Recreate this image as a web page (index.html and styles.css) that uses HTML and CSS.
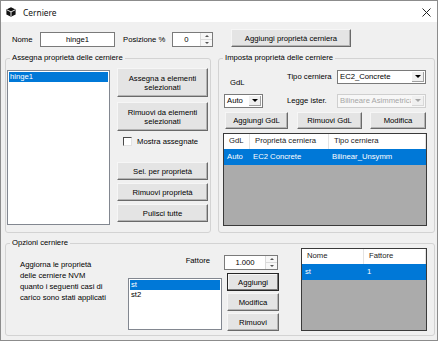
FILE: index.html
```html
<!DOCTYPE html>
<html lang="it">
<head>
    <meta charset="UTF-8">
    <meta name="viewport" content="width=device-width, initial-scale=1.0">
    <title>Cerniere</title>
    <link rel="stylesheet" href="styles.css">
</head>
<body>

<div class="window">
    <div class="titlebar">
        <svg class="app-icon" viewBox="0 0 10 10" width="10" height="10">
            <path d="M5 0.3 L9.6 2.6 V7.4 L5 9.7 L0.4 7.4 V2.6 Z" fill="#111"/>
            <path d="M1 2.9 L5 4.9 L9 2.9 M5 4.9 V9.3" stroke="#fff" stroke-width="0.9" fill="none"/>
        </svg>
        <span class="title">Cerniere</span>
        <svg class="close" viewBox="0 0 9 9" width="9" height="9">
            <path d="M0.5 0.5 L8.5 8.5 M8.5 0.5 L0.5 8.5" stroke="#222" stroke-width="1"/>
        </svg>
    </div>

    <div class="client">
        <div class="top-row">
            <span class="lbl lbl-nome">Nome</span>
            <div class="textbox name-box">hinge1</div>
            <span class="lbl lbl-pos">Posizione %</span>
            <div class="spin spin-pos">
                <span class="spin-text">0</span>
                <span class="spin-btns"><i class="spin-up"></i><i class="spin-down"></i></span>
            </div>
            <button class="btn btn-add-prop">Aggiungi proprietà cerniera</button>
        </div>

        <div class="mid-row">
            <fieldset class="group group-assign">
                <legend>Assegna proprietà delle cerniere</legend>
                <div class="assign-body">
                    <div class="listbox lb-hinges">
                        <div class="lb-item selected">hinge1</div>
                    </div>
                    <div class="assign-buttons">
                        <button class="btn btn-tall">Assegna a elementi<br>selezionati</button>
                        <button class="btn btn-tall">Rimuovi da elementi<br>selezionati</button>
                        <label class="check"><span class="check-box"></span>Mostra assegnate</label>
                        <button class="btn btn-sel">Sel. per proprietà</button>
                        <button class="btn">Rimuovi proprietà</button>
                        <button class="btn">Pulisci tutte</button>
                    </div>
                </div>
            </fieldset>

            <fieldset class="group group-set">
                <legend>Imposta proprietà delle cerniere</legend>
                <div class="set-grid">
                    <span class="lbl lbl-gdl">GdL</span>
                    <span class="lbl lbl-tipo">Tipo cerniera</span>
                    <div class="combo combo-tipo">
                        <span class="combo-text">EC2_Concrete</span>
                        <span class="combo-arrow"></span>
                    </div>
                    <div class="combo combo-auto">
                        <span class="combo-text">Auto</span>
                        <span class="combo-arrow"></span>
                    </div>
                    <span class="lbl lbl-legge">Legge ister.</span>
                    <div class="combo combo-legge disabled">
                        <span class="combo-text">Bilineare Asimmetrica</span>
                        <span class="combo-arrow"></span>
                    </div>
                </div>
                <div class="set-buttons">
                    <button class="btn btn-gdl-add">Aggiungi GdL</button>
                    <button class="btn btn-gdl-del">Rimuovi GdL</button>
                    <button class="btn btn-gdl-mod">Modifica</button>
                </div>
                <div class="listview lv-gdl">
                    <div class="lv-head">
                        <span>GdL</span><span>Proprietà cerniera</span><span>Tipo cerniera</span>
                    </div>
                    <div class="lv-row selected">
                        <span>Auto</span><span>EC2 Concrete</span><span>Bilinear_Unsymm</span>
                    </div>
                </div>
            </fieldset>
        </div>

        <fieldset class="group group-options">
            <legend>Opzioni cerniere</legend>
            <div class="options-body">
                <p class="options-text">Aggiorna le proprietà<br>delle cerniere NVM<br>quanto i seguenti casi di<br>carico sono stati applicati</p>
                <div class="options-mid">
                    <div class="factor-row">
                        <span class="lbl lbl-factor">Fattore</span>
                        <div class="spin spin-factor">
                            <span class="spin-text">1.000</span>
                            <span class="spin-btns"><i class="spin-up"></i><i class="spin-down"></i></span>
                        </div>
                    </div>
                    <div class="cases-row">
                        <div class="listbox lb-cases">
                            <div class="lb-item selected">st</div>
                            <div class="lb-item">st2</div>
                        </div>
                        <div class="cases-buttons">
                            <button class="btn btn-default">Aggiungi</button>
                            <button class="btn">Modifica</button>
                            <button class="btn">Rimuovi</button>
                        </div>
                    </div>
                </div>
                <div class="listview lv-cases">
                    <div class="lv-head">
                        <span>Nome</span><span>Fattore</span>
                    </div>
                    <div class="lv-row selected">
                        <span>st</span><span>1</span>
                    </div>
                </div>
            </div>
        </fieldset>
    </div>
</div>

</body>
</html>
```

FILE: styles.css
```css
* {
    box-sizing: border-box;
}
body {
    margin: 0;
    font-family: "Liberation Sans", Arial, sans-serif;
    font-size: 7.7px;
    color: #000;
    background: #fff;
}
.window {
    width: 438px;
    height: 341px;
    border: 1px solid #8c8c8c;
    background: #f0f0f0;
    display: flex;
    flex-direction: column;
}

/* title bar */
.titlebar {
    height: 21px;
    flex: none;
    background: #fff;
    display: flex;
    align-items: center;
    padding: 1px 6px 0 5px;
}
.app-icon {
    margin-right: 7px;
}
.title {
    flex: 1;
    font-family: "Noto Sans", "Liberation Sans", sans-serif;
    font-size: 8.4px;
    color: #111;
}

.client {
    flex: 1;
    display: flex;
    flex-direction: column;
    padding: 0 2px 0 4px;
}

/* generic controls */
.lbl {
    white-space: nowrap;
}
.btn {
    font: inherit;
    color: #000;
    padding: 0;
    height: 18px;
    background: #e4e4e4;
    border: 1px solid;
    border-color: #f6f6f6 #6a6a6a #6a6a6a #f6f6f6;
    box-shadow: inset -1px -1px 0 #b4b4b4;
    text-align: center;
    line-height: 9px;
}
.btn-default {
    border: 1px solid #262626;
    box-shadow: inset -1px -1px 0 #7a7a7a, inset 1px 1px 0 #f6f6f6;
}
.textbox {
    height: 15px;
    background: #fff;
    border: 1px solid #7a7a7a;
    line-height: 13px;
    text-align: center;
}
.spin {
    height: 15px;
    display: flex;
    background: #fff;
    border: 1px solid #7a7a7a;
}
.spin-text {
    flex: 1;
    text-align: center;
    line-height: 13px;
}
.spin-btns {
    width: 12px;
    display: flex;
    flex-direction: column;
    border-left: 1px solid #dadada;
    background: #f7f7f7;
}
.spin-btns i {
    flex: 1;
    display: flex;
    align-items: center;
    justify-content: center;
}
.spin-up {
    border-bottom: 1px solid #dadada;
}
.spin-up::after {
    content: "";
    border-left: 2.5px solid transparent;
    border-right: 2.5px solid transparent;
    border-bottom: 2.5px solid #555;
}
.spin-down::after {
    content: "";
    border-left: 2.5px solid transparent;
    border-right: 2.5px solid transparent;
    border-top: 2.5px solid #555;
}
.combo {
    height: 14px;
    display: flex;
    background: #fff;
    border: 1px solid #7a7a7a;
}
.combo-text {
    flex: 1;
    padding-left: 2px;
    line-height: 12px;
    white-space: nowrap;
    overflow: hidden;
}
.combo-arrow {
    width: 12px;
    margin: 1px;
    display: flex;
    align-items: center;
    justify-content: center;
    background: #f0f0f0;
    border-right: 1px solid #a0a0a0;
    border-bottom: 1px solid #a0a0a0;
}
.combo-arrow::after {
    content: "";
    border-left: 3px solid transparent;
    border-right: 3px solid transparent;
    border-top: 3px solid #000;
}
.combo.disabled {
    border-color: #cfcfcf;
    background: #f7f7f7;
    color: #a6a6a6;
}
.combo.disabled .combo-arrow {
    border-color: #d8d8d8;
}
.combo.disabled .combo-arrow::after {
    border-top-color: #a6a6a6;
}
.listbox {
    background: #fff;
    border: 1px solid #828790;
    padding: 1px;
}
.lb-item {
    line-height: 10px;
    padding-left: 1px;
}
.selected {
    background: #0078d7;
    color: #fff;
}
.listview {
    background: #ababab;
    border: 1px solid #3a3a3a;
}
.lv-head,
.lv-row {
    display: grid;
}
.lv-head {
    height: 15px;
    background: #fff;
    line-height: 14px;
    color: #1a1a1a;
}
.lv-head span {
    border-right: 1px solid #e3e3e3;
    padding-left: 5px;
    white-space: nowrap;
}
.lv-row {
    height: 16px;
    line-height: 16px;
}
.lv-row span {
    padding-left: 3px;
    white-space: nowrap;
}
.check {
    display: flex;
    align-items: center;
    height: 10px;
}
.check-box {
    width: 9px;
    height: 9px;
    background: #fff;
    border: 1px solid;
    border-color: #4a4a4a #e2e2e2 #e2e2e2 #4a4a4a;
    margin-right: 5px;
}

/* group boxes */
.group {
    margin: 0;
    padding: 0;
    min-width: 0;
    border: 1px solid #d3d3d3;
    border-radius: 3px;
}
.group legend {
    padding: 0 2px;
    margin-left: 4px;
    line-height: 10px;
}

/* top row */
.top-row {
    display: flex;
    align-items: flex-start;
    margin-top: 10px;
    height: 15px;
}
.top-row .lbl {
    line-height: 15px;
}
.lbl-nome {
    margin-left: 7px;
    width: 28px;
}
.name-box {
    width: 75px;
}
.lbl-pos {
    margin-left: 8px;
    width: 49px;
}
.spin-pos {
    width: 41px;
}
.btn-add-prop {
    width: 120px;
    margin-left: 18px;
    margin-top: -3px;
}

/* middle groups */
.mid-row {
    display: flex;
    gap: 7px;
    margin-top: 6px;
}
.group-assign {
    width: 206px;
    height: 180px;
}
.group-set {
    width: 217px;
    height: 180px;
}
.assign-body {
    display: flex;
    align-items: flex-start;
}
.lb-hinges {
    width: 103px;
    height: 155px;
    margin: 7px 0 0 1px;
}
.assign-buttons {
    width: 91px;
    margin: 5px 0 0 7px;
    display: flex;
    flex-direction: column;
}
.assign-buttons .btn {
    margin-top: 3px;
}
.assign-buttons .btn:first-child {
    margin-top: 0;
}
.assign-buttons .btn-tall {
    height: 29px;
    margin-top: 5px;
}
.check {
    margin: 5px 0 0 6px;
}
.assign-buttons .btn-sel {
    margin-top: 16px;
}

.set-grid {
    display: grid;
    grid-template-columns: 39px 24px 50px 89px;
    grid-template-rows: 14px 14px;
    row-gap: 10px;
    margin: 7px 0 0 5px;
}
.set-grid .lbl {
    line-height: 14px;
}
.lbl-gdl {
    grid-column: 1;
    grid-row: 1;
    align-self: end;
    line-height: 9px !important;
    margin-bottom: -3px;
    padding-left: 6px;
}
.lbl-tipo,
.lbl-legge {
    grid-column: 3;
}
.combo-tipo,
.combo-legge {
    grid-column: 4;
}
.combo-auto {
    grid-column: 1;
    grid-row: 2;
}
.set-buttons {
    display: flex;
    margin: 4px 0 0 6px;
}
.set-buttons .btn {
    height: 17px;
}
.btn-gdl-add {
    width: 63px;
}
.btn-gdl-del {
    width: 65px;
    margin-left: 9px;
}
.btn-gdl-mod {
    width: 56px;
    margin-left: 8px;
}
.lv-gdl {
    width: 204px;
    height: 93px;
    margin: 4px 0 0 4px;
}
.lv-gdl .lv-head,
.lv-gdl .lv-row {
    grid-template-columns: 26px 79px 1fr;
}

/* options group */
.group-options {
    height: 98px;
    margin-top: 5px;
}
.options-body {
    display: flex;
    align-items: flex-start;
}
.options-text {
    width: 108px;
    margin: 11px 0 0 14px;
    line-height: 11px;
}
.options-mid {
    width: 151px;
    margin-top: 7px;
}
.factor-row {
    display: flex;
    height: 15px;
}
.lbl-factor {
    width: 96px;
    text-align: right;
    padding-right: 14px;
    line-height: 9px;
    margin-top: 1px;
}
.spin-factor {
    width: 54px;
}
.cases-row {
    display: flex;
    align-items: flex-start;
    margin-top: 3px;
}
.lb-cases {
    width: 94px;
    height: 52px;
    margin-top: 5px;
}
.cases-buttons {
    width: 52px;
    margin-left: 5px;
    display: flex;
    flex-direction: column;
    gap: 2px;
}
.lv-cases {
    width: 126px;
    height: 83px;
    margin-left: 22px;
}
.lv-cases .lv-head,
.lv-cases .lv-row {
    grid-template-columns: 62px 1fr;
}
```
